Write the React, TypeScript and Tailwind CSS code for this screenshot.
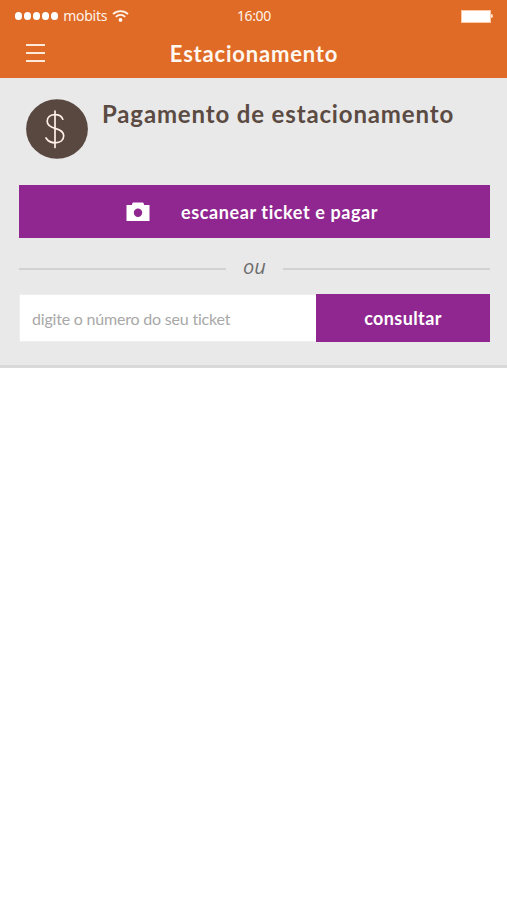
import { useState } from 'react';

const SIGNAL_DOTS = [0, 1, 2, 3, 4];

function StatusBar() {
  return (
    <div className="relative flex h-8 items-center justify-between pl-[15px] pr-[14px] text-[#fff3ea] font-['Noto_Sans',sans-serif]">
      <div className="flex items-center">
        <div className="flex gap-[1.8px]">
          {SIGNAL_DOTS.map((dot) => (
            <span key={dot} className="h-[7.2px] w-[7.2px] rounded-full bg-white" />
          ))}
        </div>
        <span className="ml-[5px] w-[46px] whitespace-nowrap text-[14px] leading-5 tracking-[-0.25px]">mobits</span>
        <svg className="ml-[3px]" width="17" height="13" viewBox="0 0 17 13" fill="none" stroke="currentColor" strokeWidth="1.8">
          <path d="M1 4.1C5.2 0 11.8 0 16 4.1" />
          <path d="M3.8 6.9c2.7-2.6 6.7-2.6 9.4 0" />
          <circle cx="8.5" cy="9.9" r="1.9" fill="white" stroke="none" />
        </svg>
      </div>

      <span className="absolute left-[237px] text-[14px] leading-5 tracking-[-0.4px]">16:00</span>

      {/* Battery */}
      <div className="flex items-center">
        <span className="h-[13px] w-[30px] border border-[#ffc9a4] bg-white" />
        <span className="h-1 w-[2px] rounded-r-full bg-[#ffe2ce]" />
      </div>
    </div>
  );
}

function Header() {
  return (
    <header className="h-[78px] bg-[#df6b26]">
      <StatusBar />
      <div className="grid h-[42px] grid-cols-[1fr_auto_1fr] items-center">
        <button aria-label="Menu" className="ml-[26px] flex w-[19px] flex-col gap-[6px]">
          <span className="h-[2px] w-full bg-[#ffe9da]" />
          <span className="h-[2px] w-full bg-[#ffe9da]" />
          <span className="h-[2px] w-full bg-[#ffe9da]" />
        </button>
        <h1 className="pl-px pt-[2px] text-[22px] font-bold leading-none text-[#fff8f0] font-['Lato',sans-serif] tracking-[0.8px]">
          Estacionamento
        </h1>
      </div>
    </header>
  );
}

function DollarIcon() {
  return (
    <svg className="shrink-0" width="62" height="60" viewBox="0 0 62 60" fill="none">
      <ellipse cx="31" cy="30" rx="30.9" ry="29.8" fill="#584840" />
      <g stroke="#fff1e6" strokeWidth="1.7" strokeLinecap="round">
        <path d="M29 12v36.5" />
        <path d="M36.8 20.2c-1.2-2.9-4-4.5-7.6-4.5-4.8 0-8 2.7-8 6.5 0 4.4 3.5 5.9 8 7.2 4.8 1.4 8.5 3.1 8.5 7.3 0 4.3-3.4 7.1-8.5 7.1-4.5 0-7.4-1.9-9.2-4.8" />
      </g>
    </svg>
  );
}

function CameraIcon() {
  return (
    <svg className="mt-px" width="24" height="20" viewBox="0 0 24 20" fill="white">
      <path fillRule="evenodd" d="M.5 3H6V2l1-1.5h10L18 2v1h5.5v16H.5zM12 6.6a4.2 4.2 0 1 0 0 8.4 4.2 4.2 0 0 0 0-8.4z" />
    </svg>
  );
}

export default function App() {
  const [ticket, setTicket] = useState('');

  return (
    <div className="min-h-screen w-full bg-white">
      <Header />

      <main className="h-[290px] border-b-[3px] border-[#d9d9d9] bg-[#e9e9e9] pl-[19px] pr-[17px] pt-[21px]">
        <div className="flex items-start gap-[14px] pl-[7px]">
          <DollarIcon />
          <h2 className="mt-[3px] whitespace-nowrap text-[24px] font-bold leading-6 text-[#5b4b43] font-['Lato',sans-serif] tracking-[0.85px]">
            Pagamento de estacionamento
          </h2>
        </div>

        <button className="mt-[26px] flex h-[53px] w-full items-center bg-[#90268f] pl-[107px] text-white">
          <CameraIcon />
          <span className="ml-[31px] mt-px text-[18px] font-bold font-['Lato',sans-serif] tracking-[0.6px]">
            escanear ticket e pagar
          </span>
        </button>

        <div className="mt-[17px] flex h-6 items-center">
          <span className="mt-[3px] h-[2px] w-[207px] bg-[#d2d2d2]" />
          <span className="flex-1 text-center text-[20px] italic leading-6 text-[#6e6e6e] font-['Open_Sans',sans-serif]">ou</span>
          <span className="mt-[3px] h-[2px] w-[207px] bg-[#d2d2d2]" />
        </div>

        <form className="mt-[15px] flex h-12" onSubmit={(e) => e.preventDefault()}>
          <input
            value={ticket}
            onChange={(e) => setTicket(e.target.value)}
            placeholder="digite o número do seu ticket"
            className="w-[297px] border border-r-0 border-[#eeeeee] bg-white pl-3 pt-px text-[16px] text-[#6e6e6e] outline-none placeholder:text-[#a8a8a8] font-['Lato',sans-serif] tracking-[-0.2px]"
          />
          <button className="flex-1 bg-[#90268f] pt-px text-[18px] font-bold text-white font-['Lato',sans-serif] tracking-[0.4px]">
            consultar
          </button>
        </form>
      </main>
    </div>
  );
}
